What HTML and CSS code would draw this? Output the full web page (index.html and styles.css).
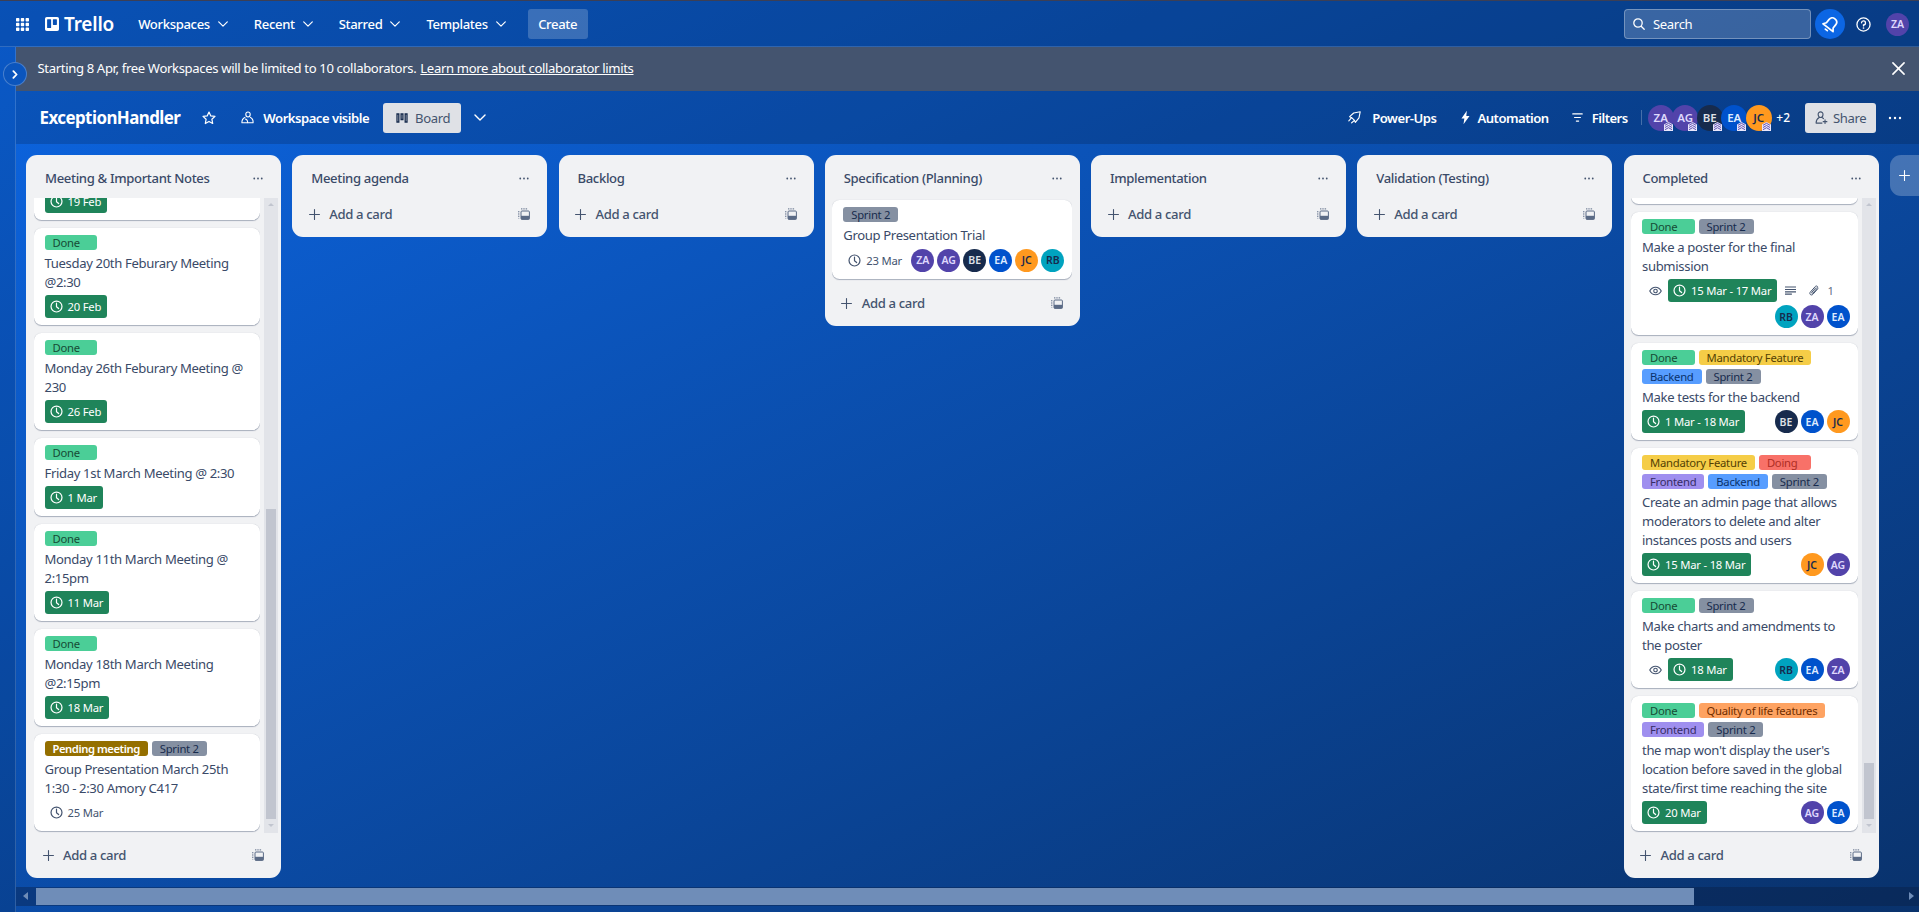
FILE: index.html
```html
<!DOCTYPE html>
<html lang="en">
<head>
<meta charset="utf-8">
<title>ExceptionHandler | Trello</title>
<link rel="stylesheet" href="styles.css">
</head>
<body>
<svg class="sprite" aria-hidden="true">
  <symbol id="i-grid" viewBox="0 0 13 13"><path fill="currentColor" d="M0 .7C0 .3.3 0 .7 0h2c.4 0 .7.3.7.7v2c0 .4-.3.7-.7.7h-2C.3 3.400 0 3.100 0 2.700zM4.800.7c0-.4.3-.7.7-.7h2c.4 0 .7.3.7.7v2c0 .4-.3.7-.7.7h-2c-.4 0-.7-.3-.7-.7zM9.600.7c0-.4.3-.7.7-.7h2c.4 0 .7.3.7.7v2c0 .4-.3.7-.7.700h-2c-.4 0-.7-.3-.7-.7zM0 5.500c0-.4.3-.7.7-.7h2c.4 0 .7.3.7.7v2c0 .4-.3.7-.7.7h-2c-.4 0-.7-.3-.7-.7zM4.800 5.500c0-.4.3-.7.7-.7h2c.4 0 .7.3.7.7v2c0 .4-.3.7-.7.7h-2c-.4 0-.7-.3-.7-.7zM9.600 5.500c0-.4.3-.7.7-.7h2c.4 0 .7.3.7.7v2c0 .4-.3.7-.7.7h-2c-.4 0-.7-.3-.7-.7zM0 10.300c0-.4.3-.7.7-.7h2c.4 0 .7.3.7.7v2c0 .4-.3.7-.7.7h-2c-.4 0-.7-.3-.7-.7zM4.800 10.300c0-.4.3-.7.7-.7h2c.4 0 .7.3.7.7v2c0 .4-.3.7-.7.7h-2c-.4 0-.7-.3-.7-.7zM9.600 10.300c0-.4.3-.7.7-.7h2c.4 0 .7.3.7.7v2c0 .4-.3.7-.7.7h-2c-.4 0-.7-.3-.7-.7z"/></symbol>
  <symbol id="i-logo" viewBox="0 0 16 16"><path fill="currentColor" fill-rule="evenodd" d="M2 0h12a2 2 0 0 1 2 2v12a2 2 0 0 1-2 2H2a2 2 0 0 1-2-2V2a2 2 0 0 1 2-2zm1 2.500a.6.6 0 0 0-.6.6v8.800a.6.6 0 0 0 .6.6h3.400a.6.6 0 0 0 .6-.6V3.100a.6.6 0 0 0-.6-.6zm6.600 0a.6.6 0 0 0-.6.6v5.300a.6.6 0 0 0 .6.6H13a.6.6 0 0 0 .6-.6V3.100a.6.6 0 0 0-.6-.6z"/></symbol>
  <symbol id="i-chev" viewBox="0 0 10 6"><path fill="none" stroke="currentColor" stroke-width="1.200" stroke-linecap="round" stroke-linejoin="round" d="M.7.8 5 5.100 9.300.8"/></symbol>
  <symbol id="i-side" viewBox="0 0 6 10"><path fill="none" stroke="currentColor" stroke-width="2" stroke-linecap="round" stroke-linejoin="round" d="m1.200 1.200 3.600 3.800-3.600 3.800"/></symbol>
  <symbol id="i-search" viewBox="0 0 12 12"><circle cx="5" cy="5" r="4.200" fill="none" stroke="currentColor" stroke-width="1.300"/><path stroke="currentColor" stroke-width="1.300" stroke-linecap="round" d="m8.200 8.200 3 3"/></symbol>
  <symbol id="i-bell" viewBox="0 0 16 16"><g transform="rotate(38 8 8)" fill="none" stroke="currentColor" stroke-width="1.600" stroke-linejoin="round" stroke-linecap="round"><path d="M8 1.200c-2.500 0-4 1.800-4 4.100v3.800L2 11.800h12l-2-2.700V5.300c0-2.300-1.500-4.100-4-4.100z"/><path d="M6.800 14.400h2.400"/></g></symbol>
  <symbol id="i-rocket" viewBox="0 0 16 16"><path fill="none" stroke="currentColor" stroke-width="1.400" stroke-linejoin="round" stroke-linecap="round" d="M15 1 7 2.500 2 7l2.500 1.200L8 11.500 9 14l4.500-5.500zM4.500 8.200 1 12.200M8 11.500l-3.500 3"/></symbol>
  <symbol id="i-help" viewBox="0 0 16 16"><circle cx="8" cy="8" r="7" fill="none" stroke="currentColor" stroke-width="1.400"/><path fill="none" stroke="currentColor" stroke-width="1.400" stroke-linecap="round" d="M5.900 6.200A2.100 2.100 0 1 1 8 8.400v1.100"/><circle cx="8" cy="11.700" r=".9" fill="currentColor"/></symbol>
  <symbol id="i-x" viewBox="0 0 14 14"><path stroke="currentColor" stroke-width="1.700" stroke-linecap="round" d="m1 1 12 12M13 1 1 13"/></symbol>
  <symbol id="i-star" viewBox="0 0 14 14"><path fill="none" stroke="currentColor" stroke-width="1.200" stroke-linejoin="round" d="m7 1 1.800 3.900 4.200.5-3.100 2.900.8 4.200L7 10.400l-3.700 2.100.8-4.200L1 5.400l4.200-.5z"/></symbol>
  <symbol id="i-team" viewBox="0 0 13 13"><g fill="none" stroke="currentColor" stroke-width="1.100" stroke-linejoin="round"><path d="M7 1a2.200 2.200 0 0 1 2.200 2.300C9.200 4.900 8.200 6 7 6S4.800 4.900 4.800 3.300A2.200 2.200 0 0 1 7 1z"/><path d="M4.300 6.200C2.300 7 .8 9 .9 11.800h5.700c.3-2-1-3.800-2.700-3.800"/><path d="M9 6.200c1.900.8 3.300 3 3.100 5.600H6.600"/></g></symbol>
  <symbol id="i-board" viewBox="0 0 12 10"><path fill="none" stroke="currentColor" stroke-width="1.300" d="M1 1h1.800v8H1zM5.100 1h1.800v5.500H5.100zM9.200 1H11v8H9.200z"/></symbol>
  <symbol id="i-bolt" viewBox="0 0 10 15"><path fill="currentColor" d="M6.500 0 .5 8.500h3.200L2.800 15 9.500 5.800H5.900z"/></symbol>
  <symbol id="i-filter" viewBox="0 0 12 10"><path stroke="currentColor" stroke-width="1.200" stroke-linecap="round" d="M.7 1h10.600M2.700 5h6.600M4.700 9h2.600"/></symbol>
  <symbol id="i-share" viewBox="0 0 14 14"><path fill="none" stroke="currentColor" stroke-width="1.200" stroke-linecap="round" stroke-linejoin="round" d="M6 1a2.600 2.600 0 0 1 2.600 2.800C8.600 5.500 7.500 7 6 7S3.400 5.500 3.400 3.800A2.600 2.600 0 0 1 6 1zM1.200 13c-.1-3 1.600-5 3.300-6M7.600 7c.6.300 1.100.7 1.500 1.200M1.200 13h6.300M10.800 9.500v4M8.800 11.500h4"/></symbol>
  <symbol id="i-dots" viewBox="0 0 14 4"><circle cx="2" cy="2" r="1.200" fill="currentColor"/><circle cx="7" cy="2" r="1.200" fill="currentColor"/><circle cx="12" cy="2" r="1.200" fill="currentColor"/></symbol>
  <symbol id="i-plus" viewBox="0 0 12 12"><path stroke="currentColor" stroke-width="1.200" stroke-linecap="round" d="M6 .6v10.800M.6 6h10.800"/></symbol>
  <symbol id="i-template" viewBox="0 0 12 12"><rect x="3" y="3" width="8.400" height="8.400" rx="1" fill="none" stroke="currentColor" stroke-width="1"/><path fill="currentColor" d="M3 7.800h8.400v3.600H3z"/><path fill="none" stroke="currentColor" stroke-width="1" stroke-dasharray="1.400 .9" d="M.8 3v7.500M3 .9h7"/></symbol>
  <symbol id="i-clock" viewBox="0 0 14 14"><circle cx="7" cy="7" r="5.900" fill="none" stroke="currentColor" stroke-width="1.300"/><path fill="none" stroke="currentColor" stroke-width="1.300" stroke-linecap="round" stroke-linejoin="round" d="M7 3.400v3.800l2.300 2"/></symbol>
  <symbol id="i-eye" viewBox="0 0 14 10"><path fill="none" stroke="currentColor" stroke-width="1.200" d="M.8 5C2.300 2.200 4.500.9 7 .9s4.700 1.300 6.200 4.100C11.700 7.800 9.500 9.100 7 9.100S2.300 7.800.8 5z"/><circle cx="7" cy="5" r="1.900" fill="none" stroke="currentColor" stroke-width="1.200"/></symbol>
  <symbol id="i-desc" viewBox="0 0 12 9"><path stroke="currentColor" stroke-width="1.300" d="M0 .7h12M0 3.400h12M0 6.100h12M0 8.400h7.500"/></symbol>
  <symbol id="i-clip" viewBox="0 0 11 13"><path fill="none" stroke="currentColor" stroke-width="1.100" stroke-linecap="round" d="M9.700 4 4.400 10c-.9 1-2.100 1.100-2.900.4s-.8-1.900.1-2.900L6.900 1.600c.7-.7 1.600-.8 2.200-.3s.6 1.400 0 2.100L4.300 8.700c-.4.400-.9.500-1.200.2s-.3-.8.100-1.200L7.500 3"/></symbol>
  <symbol id="i-admin" viewBox="0 0 9 9"><path fill="#e9e6fb" d="M4.500 0 9 2.500V9H0V2.500z"/><path fill="none" stroke="#5243aa" stroke-width=".9" d="m1 3.300 3.500-2 3.500 2M1 5.500l3.500-2 3.500 2M1 7.700l3.500-2 3.500 2"/></symbol>
</svg>

<header class="topbar">
  <svg class="ic-grid"><use href="#i-grid"/></svg>
  <div class="brand"><svg class="ic-logo"><use href="#i-logo"/></svg><span class="brand-name">Trello</span></div>
  <nav class="topnav">
    <span class="topnav-item">Workspaces<svg class="ic-chev"><use href="#i-chev"/></svg></span>
    <span class="topnav-item">Recent<svg class="ic-chev"><use href="#i-chev"/></svg></span>
    <span class="topnav-item">Starred<svg class="ic-chev"><use href="#i-chev"/></svg></span>
    <span class="topnav-item">Templates<svg class="ic-chev"><use href="#i-chev"/></svg></span>
  </nav>
  <button class="create">Create</button>
  <div class="topbar-right">
    <div class="search"><svg class="ic-search"><use href="#i-search"/></svg><span>Search</span></div>
    <span class="bell"><svg class="ic-bell"><use href="#i-bell"/></svg></span>
    <svg class="ic-help"><use href="#i-help"/></svg>
    <span class="avatar me purple">ZA</span>
  </div>
</header>

<div class="shell">
  <aside class="side-strip"><span class="side-toggle"><svg class="ic-side"><use href="#i-side"/></svg></span></aside>
  <main class="content">
    <div class="banner">
      <span class="banner-text">Starting 8 Apr, free Workspaces will be limited to 10 collaborators. <a class="banner-link">Learn more about collaborator limits</a></span>
      <svg class="ic-x"><use href="#i-x"/></svg>
    </div>

    <div class="boardbar">
      <h1 class="board-title">ExceptionHandler</h1>
      <svg class="ic-star"><use href="#i-star"/></svg>
      <span class="bar-item vis"><svg class="ic-team"><use href="#i-team"/></svg>Workspace visible</span>
      <span class="light-btn board-btn"><svg class="ic-board"><use href="#i-board"/></svg>Board</span>
      <svg class="ic-barchev"><use href="#i-chev"/></svg>
      <div class="boardbar-right">
        <span class="bar-item pu"><svg class="ic-rocket-s"><use href="#i-rocket"/></svg>Power-Ups</span>
        <span class="bar-item au"><svg class="ic-bolt"><use href="#i-bolt"/></svg>Automation</span>
        <span class="bar-item fi"><svg class="ic-filter"><use href="#i-filter"/></svg>Filters</span>
        <span class="bar-div"></span>
        <div class="members">
          <span class="member purple">ZA<svg class="ic-admin"><use href="#i-admin"/></svg></span>
          <span class="member purple">AG<svg class="ic-admin"><use href="#i-admin"/></svg></span>
          <span class="member navy">BE<svg class="ic-admin"><use href="#i-admin"/></svg></span>
          <span class="member blue">EA<svg class="ic-admin"><use href="#i-admin"/></svg></span>
          <span class="member orange">JC<svg class="ic-admin"><use href="#i-admin"/></svg></span>
        </div>
        <span class="more-members">+2</span>
        <span class="light-btn share-btn"><svg class="ic-share"><use href="#i-share"/></svg>Share</span>
        <svg class="ic-bardots"><use href="#i-dots"/></svg>
      </div>
    </div>

    <div class="canvas">
      <div class="lists">

        <section class="list">
          <div class="list-head"><h2>Meeting &amp; Important Notes</h2><svg class="ic-dots"><use href="#i-dots"/></svg></div>
          <div class="list-body scrolling">
            <div class="cards">
              <article class="card"><div class="row"><span class="date done"><svg class="ic-clock"><use href="#i-clock"/></svg>19 Feb</span></div></article>
              <article class="card">
                <div class="labels"><span class="label green wide">Done</span></div>
                <p class="title">Tuesday 20th Feburary Meeting @2:30</p>
                <div class="row"><span class="date done"><svg class="ic-clock"><use href="#i-clock"/></svg>20 Feb</span></div>
              </article>
              <article class="card">
                <div class="labels"><span class="label green wide">Done</span></div>
                <p class="title">Monday 26th Feburary Meeting @ 230</p>
                <div class="row"><span class="date done"><svg class="ic-clock"><use href="#i-clock"/></svg>26 Feb</span></div>
              </article>
              <article class="card">
                <div class="labels"><span class="label green wide">Done</span></div>
                <p class="title">Friday 1st March Meeting @ 2:30</p>
                <div class="row"><span class="date done"><svg class="ic-clock"><use href="#i-clock"/></svg>1 Mar</span></div>
              </article>
              <article class="card">
                <div class="labels"><span class="label green wide">Done</span></div>
                <p class="title">Monday 11th March Meeting @ 2:15pm</p>
                <div class="row"><span class="date done"><svg class="ic-clock"><use href="#i-clock"/></svg>11 Mar</span></div>
              </article>
              <article class="card">
                <div class="labels"><span class="label green wide">Done</span></div>
                <p class="title">Monday 18th March Meeting @2:15pm</p>
                <div class="row"><span class="date done"><svg class="ic-clock"><use href="#i-clock"/></svg>18 Mar</span></div>
              </article>
              <article class="card">
                <div class="labels"><span class="label amber">Pending meeting</span><span class="label grey">Sprint 2</span></div>
                <p class="title">Group Presentation March 25th 1:30 - 2:30 Amory C417</p>
                <div class="row"><span class="date"><svg class="ic-clock"><use href="#i-clock"/></svg>25 Mar</span></div>
              </article>
            </div>
            <div class="vbar">
              <span class="vbar-up"></span>
              <span class="vbar-space"></span>
              <span class="vbar-thumb thumb-a"></span>
              <span class="vbar-down"></span>
            </div>
          </div>
          <div class="list-foot"><svg class="ic-plus"><use href="#i-plus"/></svg><span class="add">Add a card</span><svg class="ic-template"><use href="#i-template"/></svg></div>
        </section>

        <section class="list">
          <div class="list-head"><h2>Meeting agenda</h2><svg class="ic-dots"><use href="#i-dots"/></svg></div>
          <div class="list-foot"><svg class="ic-plus"><use href="#i-plus"/></svg><span class="add">Add a card</span><svg class="ic-template"><use href="#i-template"/></svg></div>
        </section>

        <section class="list">
          <div class="list-head"><h2>Backlog</h2><svg class="ic-dots"><use href="#i-dots"/></svg></div>
          <div class="list-foot"><svg class="ic-plus"><use href="#i-plus"/></svg><span class="add">Add a card</span><svg class="ic-template"><use href="#i-template"/></svg></div>
        </section>

        <section class="list">
          <div class="list-head"><h2>Specification (Planning)</h2><svg class="ic-dots"><use href="#i-dots"/></svg></div>
          <div class="list-body">
            <div class="cards">
              <article class="card">
                <div class="labels"><span class="label grey">Sprint 2</span></div>
                <p class="title">Group Presentation Trial</p>
                <div class="row row-tall">
                  <span class="date"><svg class="ic-clock"><use href="#i-clock"/></svg>23 Mar</span>
                  <div class="people">
                    <span class="avatar purple">ZA</span><span class="avatar purple">AG</span><span class="avatar navy">BE</span><span class="avatar blue">EA</span><span class="avatar orange">JC</span><span class="avatar teal">RB</span>
                  </div>
                </div>
              </article>
            </div>
          </div>
          <div class="list-foot"><svg class="ic-plus"><use href="#i-plus"/></svg><span class="add">Add a card</span><svg class="ic-template"><use href="#i-template"/></svg></div>
        </section>

        <section class="list">
          <div class="list-head"><h2>Implementation</h2><svg class="ic-dots"><use href="#i-dots"/></svg></div>
          <div class="list-foot"><svg class="ic-plus"><use href="#i-plus"/></svg><span class="add">Add a card</span><svg class="ic-template"><use href="#i-template"/></svg></div>
        </section>

        <section class="list">
          <div class="list-head"><h2>Validation (Testing)</h2><svg class="ic-dots"><use href="#i-dots"/></svg></div>
          <div class="list-foot"><svg class="ic-plus"><use href="#i-plus"/></svg><span class="add">Add a card</span><svg class="ic-template"><use href="#i-template"/></svg></div>
        </section>

        <section class="list">
          <div class="list-head"><h2>Completed</h2><svg class="ic-dots"><use href="#i-dots"/></svg></div>
          <div class="list-body scrolling">
            <div class="cards">
              <article class="card card-stub"></article>
              <article class="card">
                <div class="labels"><span class="label green wide">Done</span><span class="label grey">Sprint 2</span></div>
                <p class="title">Make a poster for the final submission</p>
                <div class="row">
                  <span class="slot"><svg class="ic-eye"><use href="#i-eye"/></svg></span>
                  <span class="date done"><svg class="ic-clock"><use href="#i-clock"/></svg>15 Mar - 17 Mar</span>
                  <span class="slot"><svg class="ic-desc"><use href="#i-desc"/></svg></span>
                  <span class="attach"><svg class="ic-clip"><use href="#i-clip"/></svg>1</span>
                  <div class="people">
                    <span class="avatar teal">RB</span><span class="avatar purple">ZA</span><span class="avatar blue">EA</span>
                  </div>
                </div>
              </article>
              <article class="card">
                <div class="labels"><span class="label green wide">Done</span><span class="label yellow">Mandatory Feature</span><span class="label sky">Backend</span><span class="label grey">Sprint 2</span></div>
                <p class="title">Make tests for the backend</p>
                <div class="row">
                  <span class="date done"><svg class="ic-clock"><use href="#i-clock"/></svg>1 Mar - 18 Mar</span>
                  <div class="people"><span class="avatar navy">BE</span><span class="avatar blue">EA</span><span class="avatar orange">JC</span></div>
                </div>
              </article>
              <article class="card">
                <div class="labels"><span class="label yellow">Mandatory Feature</span><span class="label red wide">Doing</span><span class="label violet">Frontend</span><span class="label sky">Backend</span><span class="label grey">Sprint 2</span></div>
                <p class="title">Create an admin page that allows moderators to delete and alter instances posts and users</p>
                <div class="row">
                  <span class="date done"><svg class="ic-clock"><use href="#i-clock"/></svg>15 Mar - 18 Mar</span>
                  <div class="people"><span class="avatar orange">JC</span><span class="avatar purple">AG</span></div>
                </div>
              </article>
              <article class="card">
                <div class="labels"><span class="label green wide">Done</span><span class="label grey">Sprint 2</span></div>
                <p class="title">Make charts and amendments to the poster</p>
                <div class="row">
                  <span class="slot"><svg class="ic-eye"><use href="#i-eye"/></svg></span>
                  <span class="date done"><svg class="ic-clock"><use href="#i-clock"/></svg>18 Mar</span>
                  <div class="people"><span class="avatar teal">RB</span><span class="avatar blue">EA</span><span class="avatar purple">ZA</span></div>
                </div>
              </article>
              <article class="card">
                <div class="labels"><span class="label green wide">Done</span><span class="label peach">Quality of life features</span><span class="label violet">Frontend</span><span class="label grey">Sprint 2</span></div>
                <p class="title">the map won't display the user's location before saved in the global state/first time reaching the site</p>
                <div class="row">
                  <span class="date done"><svg class="ic-clock"><use href="#i-clock"/></svg>20 Mar</span>
                  <div class="people"><span class="avatar purple">AG</span><span class="avatar blue">EA</span></div>
                </div>
              </article>
            </div>
            <div class="vbar">
              <span class="vbar-up"></span>
              <span class="vbar-space"></span>
              <span class="vbar-thumb thumb-g"></span>
              <span class="vbar-down"></span>
            </div>
          </div>
          <div class="list-foot"><svg class="ic-plus"><use href="#i-plus"/></svg><span class="add">Add a card</span><svg class="ic-template"><use href="#i-template"/></svg></div>
        </section>

        <button class="add-list"><svg class="ic-addlist"><use href="#i-plus"/></svg></button>
      </div>

      <div class="hbar">
        <span class="hbar-left"></span>
        <span class="hbar-thumb"></span>
        <span class="hbar-right"></span>
      </div>
    </div>
  </main>
</div>
</body>
</html>
```

FILE: styles.css
```css
* { box-sizing: border-box; }
html, body { margin: 0; height: 100%; overflow: hidden; }
body {
  display: flex;
  flex-direction: column;
  height: 912px;
  font-family: "Noto Sans", "Liberation Sans", sans-serif;
  font-size: 13.1px;
  color: #172b4d;
  background: linear-gradient(to bottom right, #0c66e4, #09326c);
}
.sprite { display: none; }
svg { display: block; flex: none; }

/* top bar */
.topbar {
  display: flex;
  align-items: center;
  height: 47px;
  flex: none;
  padding: 1px 10px 0 16px;
  color: #fff;
  background: rgba(0, 0, 0, 0.2);
  border-top: 1.5px solid #3c3f55;
  border-bottom: 1px solid rgba(255, 255, 255, 0.16);
}
.ic-grid { width: 13px; height: 13px; }
.brand { display: flex; align-items: center; margin-left: 16px; gap: 5px; }
.ic-logo { width: 14px; height: 14px; }
.brand-name { font-size: 19px; font-weight: 600; line-height: 20px; letter-spacing: -0.2px; }
.topnav { display: flex; margin-left: 24px; gap: 26px; }
.topnav-item { display: flex; align-items: center; gap: 8px; font-weight: 500; letter-spacing: -0.35px; }
.ic-chev { width: 10px; height: 6px; }
.create {
  margin-left: 22px;
  width: 60px;
  height: 30px;
  border: 0;
  border-radius: 3px;
  color: #fff;
  font: 500 13.1px "Noto Sans", sans-serif;
  letter-spacing: -0.35px;
  background: rgba(255, 255, 255, 0.2);
}
.topbar-right { display: flex; align-items: center; margin-left: auto; }
.search {
  display: flex;
  align-items: center;
  gap: 8px;
  width: 187px;
  height: 30px;
  padding-left: 8px;
  border: 1px solid rgba(255, 255, 255, 0.3);
  border-radius: 4px;
  background: rgba(255, 255, 255, 0.2);
  letter-spacing: -0.35px;
}
.ic-search { width: 12px; height: 12px; }
.bell {
  display: flex;
  align-items: center;
  justify-content: center;
  width: 30px;
  height: 30px;
  margin-left: 4px;
  border-radius: 50%;
  background: #0c66e4;
}
.ic-bell { width: 17px; height: 17px; }
.ic-help { width: 15px; height: 15px; margin-left: 11px; }
.me { margin-left: 15px; }

/* shell */
.shell { display: flex; flex: 1; min-height: 0; }
.side-strip {
  position: relative;
  flex: none;
  width: 16px;
  background: rgba(0, 0, 0, 0.12);
  border-right: 1px solid rgba(255, 255, 255, 0.16);
}
.side-toggle {
  position: absolute;
  top: 15px;
  left: 3px;
  z-index: 2;
  display: flex;
  align-items: center;
  justify-content: center;
  width: 24px;
  height: 24px;
  border-radius: 50%;
  color: #fff;
  background: #0b55bd;
  border: 1px solid rgba(255, 255, 255, 0.25);
}
.ic-side { width: 6px; height: 9px; }
.content { display: flex; flex-direction: column; flex: 1; min-width: 0; }

.banner {
  display: flex;
  align-items: center;
  justify-content: space-between;
  flex: none;
  height: 44px;
  padding: 0 14px 2px 21.5px;
  color: #fff;
  background: #44546f;
}
.banner-text { letter-spacing: -0.35px; }
.banner-link { margin-left: 1px; text-decoration: underline; }
.ic-x { width: 13px; height: 13px; }

.boardbar {
  display: flex;
  align-items: center;
  flex: none;
  height: 53px;
  padding: 0 17px 0 23.5px;
  color: #fff;
  background: rgba(0, 0, 0, 0.16);
}
.board-title { margin: 0; font-size: 16.9px; font-weight: 700; letter-spacing: -0.55px; }
.ic-star { width: 14px; height: 14px; margin-left: 22px; }
.bar-item { display: flex; align-items: center; font-weight: 600; letter-spacing: -0.5px; }
.vis { margin-left: 25px; gap: 9px; }
.ic-team { width: 13px; height: 13px; }
.light-btn {
  display: flex;
  align-items: center;
  height: 30px;
  border-radius: 3px;
  color: #44546f;
  background: #dfe1e6;
  letter-spacing: -0.35px;
}
.board-btn { width: 78px; margin-left: 14px; padding-left: 13px; gap: 7px; }
.ic-board { width: 12px; height: 10px; color: #172b4d; }
.ic-barchev { width: 12px; height: 7px; margin-left: 13px; }
.boardbar-right { display: flex; align-items: center; margin-left: auto; }
.ic-rocket-s { width: 13px; height: 13px; }
.pu { gap: 11px; }
.au { gap: 7px; margin-left: 25px; }
.ic-bolt { width: 9px; height: 15px; }
.fi { gap: 9px; margin-left: 23px; }
.ic-filter { width: 11px; height: 9px; }
.bar-div { width: 1px; height: 15px; margin-left: 13px; background: rgba(255, 255, 255, 0.25); }
.members { display: flex; margin-left: 6px; }
.member {
  position: relative;
  display: flex;
  align-items: center;
  justify-content: center;
  width: 26px;
  height: 26px;
  margin-right: -1.500px;
  border-radius: 50%;
  font-size: 11.5px;
  font-weight: 600;
}
.ic-admin { position: absolute; right: 1px; bottom: 0; width: 9px; height: 9px; }
.more-members { margin-left: 6px; font-size: 12px; font-weight: 500; }
.share-btn { width: 71px; margin-left: 15px; padding-left: 10px; gap: 5px; }
.ic-share { width: 13px; height: 13px; }
.ic-bardots { width: 14px; height: 4px; margin-left: 12px; }

/* avatars */
.avatar {
  display: flex;
  align-items: center;
  justify-content: center;
  flex: none;
  width: 23px;
  height: 23px;
  border-radius: 50%;
  font-size: 10.5px;
  font-weight: 600;
}
.purple { background: #5243aa; color: #dfd8fd; }
.navy { background: #172b4d; color: #dfe1e6; }
.blue { background: #0052cc; color: #deebff; }
.orange { background: #ff991f; color: #172b4d; }
.teal { background: #00a3bf; color: #172b4d; }
.member.orange { color: #172b4d; }

/* board */
.canvas { display: flex; flex-direction: column; flex: 1; min-height: 0; }
.lists {
  display: flex;
  align-items: flex-start;
  gap: 11.25px;
  flex: 1;
  min-height: 0;
  padding: 11px 0 0 10px;
  overflow: hidden;
}
.list {
  display: flex;
  flex-direction: column;
  flex: 0 0 255px;
  max-height: 100%;
  padding-bottom: 1px;
  border-radius: 11px;
  background: #f1f2f4;
}
.list-head {
  display: flex;
  align-items: center;
  justify-content: space-between;
  flex: none;
  height: 37px;
  padding: 9px 17px 0 19px;
}
.list-head h2 { margin: 0; font-size: 13.1px; font-weight: 500; letter-spacing: -0.35px; color: #3a4a68; }
.ic-dots { width: 12px; height: 3px; color: #44546f; }
.list-body { display: flex; flex: 1; min-height: 0; margin-top: 6px; padding: 0 7.500px; gap: 4px; }
.scrolling { padding-right: 3px; }
.cards {
  display: flex;
  flex-direction: column;
  justify-content: flex-end;
  flex: 1;
  min-width: 0;
  gap: 8px;
  padding: 2px 0;
  overflow: hidden;
}
.card {
  flex: none;
  padding: 7px 8px 7px 11px;
  border-radius: 7.500px;
  background: #fff;
  box-shadow: 0 1px 1px rgba(9, 30, 66, 0.3), 0 0 1px rgba(9, 30, 66, 0.2);
}
.card-stub { height: 30px; }
.labels { display: flex; flex-wrap: wrap; gap: 4px; }
.label {
  height: 15px;
  padding: 0 8px;
  border-radius: 3px;
  font-size: 11.25px;
  line-height: 15px;
  letter-spacing: -0.25px;
}
.wide { min-width: 52.500px; }
.green { background: #4bce97; color: #164b35; }
.grey { background: #8590a2; color: #172b4d; }
.yellow { background: #f5cd47; color: #533f04; }
.red { background: #f87168; color: #ae2e24; }
.violet { background: #9f8fef; color: #352c63; }
.sky { background: #579dff; color: #09326c; }
.peach { background: #fea362; color: #702e00; }
.amber { background: #946f00; color: #fff; font-weight: 600; letter-spacing: -0.45px; }
.title {
  margin: 3.500px 0;
  line-height: 19px;
  letter-spacing: -0.35px;
  color: #3a4a68;
}
.row { display: flex; flex-wrap: wrap; align-items: center; gap: 3px 0; }
.row-tall { min-height: 24px; }
.date {
  display: flex;
  align-items: center;
  gap: 5px;
  height: 23px;
  padding: 0 6px 0 5px;
  border-radius: 3px;
  font-size: 11.25px;
  letter-spacing: -0.2px;
  color: #44546f;
}
.done { background: #1f845a; color: #fff; }
.ic-clock { width: 13px; height: 13px; }
.slot { display: flex; align-items: center; justify-content: center; width: 26px; height: 23px; color: #44546f; }
.ic-eye { width: 13px; height: 10px; }
.ic-desc { width: 11px; height: 9px; }
.attach { display: flex; align-items: center; gap: 8px; margin-left: 6px; font-size: 11.25px; color: #626f86; }
.ic-clip { width: 10px; height: 12px; color: #44546f; }
.people { display: flex; gap: 3px; margin-left: auto; }
.list-foot { display: flex; align-items: center; flex: none; height: 44px; padding: 0 17px 0 16.500px; color: #44546f; }
.ic-plus { width: 11px; height: 11px; }
.add { margin-left: 9.500px; letter-spacing: -0.35px; font-weight: 500; }
.ic-template { width: 12px; height: 12px; margin-left: auto; color: #5b6b86; }

/* fake scrollbars */
.vbar { display: flex; flex-direction: column; align-items: center; flex: 0 0 14px; background: #e2e4e9; }
.vbar-up, .vbar-down { flex: none; width: 14px; height: 14px; position: relative; }
.vbar-up::before, .vbar-down::before {
  content: "";
  position: absolute;
  left: 4px;
  top: 5px;
  border: 3px solid transparent;
}
.vbar-up::before { border-bottom: 3.500px solid #c1c5cf; border-top: 0; }
.vbar-down::before { border-top: 3.500px solid #c1c5cf; border-bottom: 0; }
.vbar-space { flex: 1; }
.vbar-thumb { flex: none; width: 10px; background: #c1c5cf; }
.thumb-a { height: 310px; }
.thumb-g { height: 56px; }

.hbar {
  display: flex;
  flex: none;
  height: 19px;
  margin: 9px 0 6px;
  background: rgba(9, 30, 66, 0.4);
  align-items: center;
}
.hbar-left, .hbar-right { flex: none; position: relative; width: 20px; height: 19px; }
.hbar-left::before {
  content: "";
  position: absolute;
  left: 7px;
  top: 5px;
  border: 4px solid transparent;
  border-right: 5px solid #6f8db8;
  border-left: 0;
}
.hbar-right::before {
  content: "";
  position: absolute;
  right: 5px;
  top: 5px;
  border: 4px solid transparent;
  border-left: 5px solid #6f8db8;
  border-right: 0;
}
.hbar-thumb { width: 1658px; height: 17px; background: #6f8db8; }
.hbar-right { margin-left: auto; }

.add-list {
  display: flex;
  align-items: center;
  justify-content: center;
  flex: 0 0 255px;
  height: 41px;
  margin-right: -240px;
  padding: 0 226px 0 0;
  border: 0;
  border-radius: 11px;
  color: #fff;
  background: rgba(255, 255, 255, 0.24);
}
.ic-addlist { width: 11px; height: 11px; }
```
